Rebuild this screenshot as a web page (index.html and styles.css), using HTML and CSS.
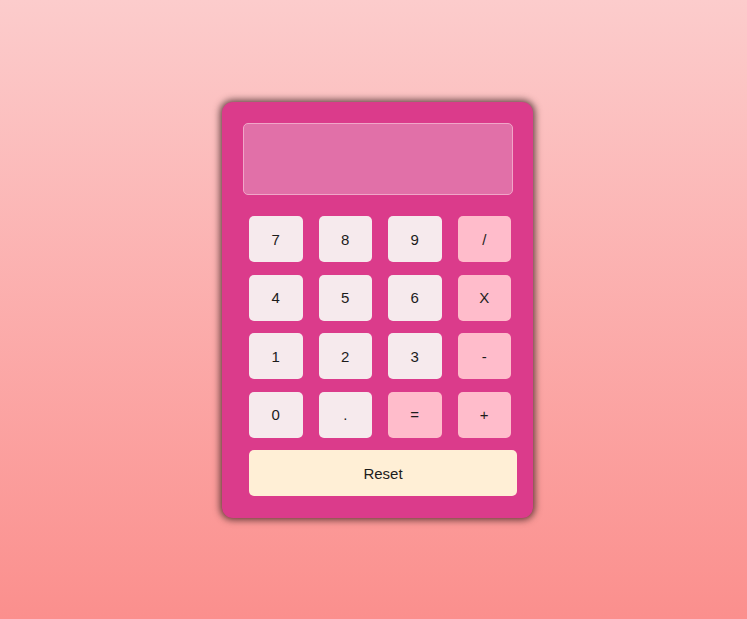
FILE: index.html
```html
<!DOCTYPE html>
<html>
<head>
<meta charset="utf-8">
<link rel="stylesheet" href="styles.css">
</head>
<body>
<div class="calc">
  <div class="display"></div>
  <div class="keys">
    <button class="key num">7</button>
    <button class="key num">8</button>
    <button class="key num">9</button>
    <button class="key op">/</button>
    <button class="key num">4</button>
    <button class="key num">5</button>
    <button class="key num">6</button>
    <button class="key op">X</button>
    <button class="key num">1</button>
    <button class="key num">2</button>
    <button class="key num">3</button>
    <button class="key op">-</button>
    <button class="key num">0</button>
    <button class="key num">.</button>
    <button class="key op">=</button>
    <button class="key op">+</button>
  </div>
  <button class="reset">Reset</button>
</div>
</body>
</html>
```

FILE: styles.css
```css
html, body {
  margin: 0;
  height: 100%;
}
body {
  background: linear-gradient(to bottom, #fccccc 0%, #fb8f8d 100%);
  font-family: "Liberation Sans", Arial, sans-serif;
  display: flex;
  justify-content: center;
  align-items: flex-start;
  padding: 102px 0 0 8px;
  box-sizing: border-box;
}
.calc {
  width: 311px;
  height: 416px;
  box-sizing: border-box;
  background: #db3b8b;
  border-radius: 11px;
  padding: 21px;
  box-shadow: 0 0 7px 2px rgba(50, 25, 25, 0.75);
  display: flex;
  flex-direction: column;
}
.display {
  height: 72px;
  width: 270px;
  box-sizing: border-box;
  background: #e170a8;
  border: 1px solid #f0a6c8;
  border-radius: 5px;
}
.keys {
  margin: 21px 0 0 6px;
  width: 262px;
  display: grid;
  grid-template-columns: repeat(4, 1fr);
  column-gap: 16px;
  row-gap: 12.5px;
}
.key, .reset {
  border: none;
  border-radius: 5px;
  font-family: "Liberation Sans", Arial, sans-serif;
  font-size: 15px;
  color: #1c1c1c;
  padding: 0;
  height: 46px;
}
.num {
  background: #f6eaed;
}
.op {
  background: #ffbccb;
}
.reset {
  margin: 12.5px 0 0 6px;
  width: 268px;
  background: #ffefd6;
}
```
